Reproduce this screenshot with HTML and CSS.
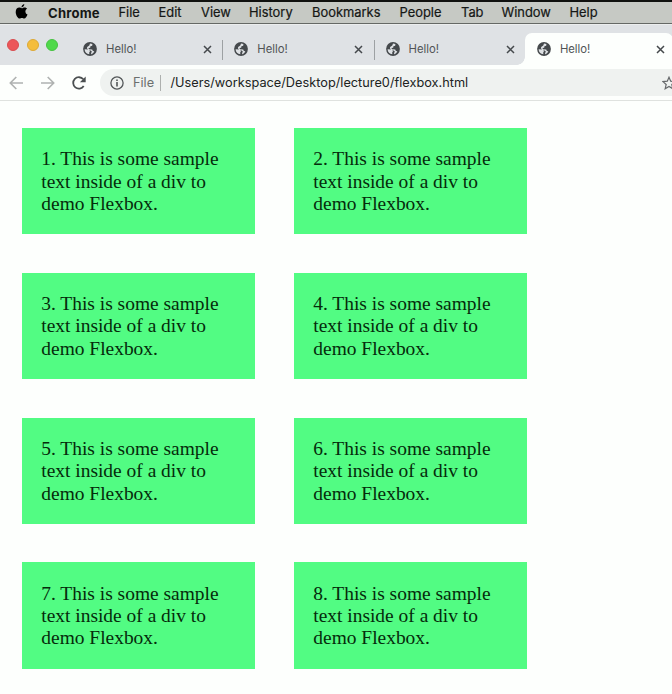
FILE: index.html
```html
<!DOCTYPE html>
<html lang="en">
<head>
<meta charset="utf-8">
<title>Hello!</title>
<link rel="stylesheet" href="styles.css">
</head>
<body>
<svg class="defs" width="0" height="0" aria-hidden="true">
  <symbol id="globe" viewBox="0 0 14 14">
    <circle cx="7" cy="7" r="6.9" fill="#45494c"/>
    <path d="M1.6 7.2 5 7.4 7 9.2 6.2 10.6 6.3 12.3C3.6 12 1.7 9.9 1.6 7.2ZM7 1.6 9.4 2.1 9.2 3.7 7.4 4.3 7.2 5.7 5.4 6 6.1 7.2 9.2 7.4 9.9 9.1 11.3 9.3C10.6 11 9.4 12 8 12.3L8.3 10.4 8.9 9.8 7.8 8.6 5.6 8.3 3.9 6.2 4.2 4.9 6.3 3.4Z" fill="#dfe2e5"/>
  </symbol>
  <symbol id="close" viewBox="0 0 9 9"><path d="M1 1 8 8M8 1 1 8" fill="none" stroke="#45494c" stroke-width="1.5"/></symbol>
</svg>
<header class="menubar">
  <svg class="apple" viewBox="0 0 12 15"><path d="M8.8.1C8.9 1.8 7.5 3.4 6 3.4 5.9 1.8 7.2.4 8.8.1ZM6.3 4.3C6.9 4.3 7.7 3.5 9 3.5 10.1 3.5 11 4 11.6 4.8 9.1 6.2 9.5 9.6 12 10.5 11.3 12.5 10 14.5 8.7 14.5 7.8 14.5 7.4 14 6.4 14 5.4 14 4.9 14.5 4.1 14.5 2.4 14.5.2 11 .2 7.9.2 5.1 1.9 3.6 3.7 3.6 4.8 3.6 5.7 4.3 6.3 4.3Z"/></svg>
  <nav class="menu"><b>Chrome</b><span>File</span><span>Edit</span><span>View</span><span>History</span><span>Bookmarks</span><span>People</span><span>Tab</span><span>Window</span><span>Help</span></nav>
</header>
<div class="tabstrip">
  <div class="lights"><i class="red"></i><i class="yellow"></i><i class="green"></i></div>
  <div class="tab"><svg class="globe"><use href="#globe"/></svg><span>Hello!</span><svg class="close"><use href="#close"/></svg></div>
  <div class="tab"><svg class="globe"><use href="#globe"/></svg><span>Hello!</span><svg class="close"><use href="#close"/></svg></div>
  <div class="tab last"><svg class="globe"><use href="#globe"/></svg><span>Hello!</span><svg class="close"><use href="#close"/></svg></div>
  <div class="tab active"><svg class="globe"><use href="#globe"/></svg><span>Hello!</span><svg class="close"><use href="#close"/></svg></div>
</div>
<div class="toolbar">
  <svg class="arrow" viewBox="0 0 14 14"><path d="M14 7H1.5M7.3 1 1.3 7l6 6"/></svg>
  <svg class="arrow forward" viewBox="0 0 14 14"><path d="M0 7h12.5M6.7 1l6 6-6 6"/></svg>
  <svg class="reload" viewBox="0 0 14 14"><path d="M11.7 10A5.7 5.7 0 1 1 11.3 3.3" fill="none" stroke="#4b4f51" stroke-width="1.8"/><path d="M13.7.4V6.2H7.9Z" fill="#4b4f51"/></svg>
  <div class="omnibox">
    <svg class="info" viewBox="0 0 14 14"><circle cx="7" cy="7" r="6.1" fill="none" stroke="#525658" stroke-width="1.3"/><path d="M6.2 6.1h1.6v4.5H6.2ZM6.2 3.4h1.6v1.5H6.2Z" fill="#525658"/></svg>
    <span class="scheme">File</span>
    <span class="url">/Users/workspace/Desktop/lecture0/flexbox.html</span>
    <svg class="star" viewBox="0 0 14 14"><path d="m7 1.2 1.7 4 4.4.4-3.3 2.9 1 4.2L7 10.4l-3.8 2.3 1-4.2L.9 5.6l4.4-.4Z" fill="none" stroke="#66696b" stroke-width="1.2"/></svg>
  </div>
</div>
<main class="container">
  <div>1. This is some sample text inside of a div to demo Flexbox.</div>
  <div>2. This is some sample text inside of a div to demo Flexbox.</div>
  <div>3. This is some sample text inside of a div to demo Flexbox.</div>
  <div>4. This is some sample text inside of a div to demo Flexbox.</div>
  <div>5. This is some sample text inside of a div to demo Flexbox.</div>
  <div>6. This is some sample text inside of a div to demo Flexbox.</div>
  <div>7. This is some sample text inside of a div to demo Flexbox.</div>
  <div>8. This is some sample text inside of a div to demo Flexbox.</div>
</main>
</body>
</html>
```
FILE: styles.css
```css
* { box-sizing: border-box; }
html, body { height: 100%; }
body { margin: 0; overflow: hidden; background: #fdfffd; font-family: Inter, "Liberation Sans", sans-serif; }
svg { display: block; flex: none; }
.defs { position: absolute; }
.menubar { height: 24px; border-top: 2px solid #10110f; border-bottom: 1px solid #656865; background: #c6c9c4; display: flex; align-items: center; padding-left: 15px; color: #151715; }
.apple { width: 13px; height: 15px; margin-top: -2px; }
.menu { display: grid; grid-template-columns: 70.5px 40px 42.5px 48px 63px 87.5px 61.5px 40.5px 68px 40px; padding-left: 20px; font-size: 12.9px; line-height: 20px; white-space: nowrap; -webkit-text-stroke: .2px; }
.menu b { font-size: 13.1px; letter-spacing: .2px; -webkit-text-stroke: 0; }
.tabstrip { height: 41px; padding-top: 8px; display: flex; overflow: hidden; background: #dfe2e5; border-top: 1px solid #eceeee; }
.lights { width: 72px; flex: none; display: flex; gap: 7.5px; padding: 6px 0 0 7px; }
.lights i { width: 12px; height: 12px; border-radius: 50%; border: 1px solid; }
.lights .red { background: #ec5659; border-color: #d84d50; }
.lights .yellow { background: #f4bd3d; border-color: #dda936; }
.lights .green { background: #50d94b; border-color: #46c242; }
.tab { width: 151.3px; flex: none; height: 32px; display: flex; align-items: center; padding-left: 11px; font-size: 11.3px; color: #505355; position: relative; }
.tab:not(.active):not(.last)::after { content: ""; position: absolute; right: 0; top: 7px; width: 1px; height: 20px; background: #9da1a3; }
.tab span { width: 98px; padding-left: 9px; }
.globe { width: 14px; height: 14px; }
.close { width: 9px; height: 9px; margin-left: 8px; }
.tab.active { width: 148px; margin-left: -1px; padding-left: 12.5px; background: #fdfffd; border-radius: 7px 7px 0 0; }
.tab.active span { padding-left: 8.5px; }
.tab.active .close { margin-left: 6.5px; }
.tab.active::before { content: ""; position: absolute; left: -8px; bottom: 0; width: 8px; height: 8px; background: radial-gradient(circle at 0 0, transparent 7.5px, #fdfffd 8px); }
.toolbar { height: 36px; padding-left: 9px; overflow: hidden; border-bottom: 1px solid #dfe2df; display: flex; align-items: center; }
.arrow { width: 14px; height: 14px; fill: none; stroke: #afb2b1; stroke-width: 1.6; }
.arrow.forward { margin-left: 18px; }
.reload { width: 14px; height: 14px; margin-left: 17px; }
.omnibox { flex: 1; min-width: 0; overflow: hidden; height: 27px; margin-left: 14px; padding-left: 10px; border-radius: 14px 0 0 14px; background: #eff2f0; display: flex; align-items: center; font-size: 12.76px; }
.info { width: 14px; height: 14px; }
.scheme { width: 28px; flex: none; margin-left: 9px; color: #6c6f6e; border-right: 1px solid #adb0ae; line-height: 16px; }
.url { width: 500.5px; flex: none; padding-left: 9.5px; color: #202322; white-space: nowrap; }
.star { width: 14px; height: 14px; }
.container { display: grid; grid-template-columns: 233.5px 233.5px; grid-auto-rows: 106.3px; column-gap: 38.5px; row-gap: 38.5px; padding: 27px 0 0 21.7px; font: 19.45px/22.3px "Liberation Serif", serif; }
.container > div { background: #52fc83; padding: 20.4px 19.6px 0; color: #052b0b; }
```
